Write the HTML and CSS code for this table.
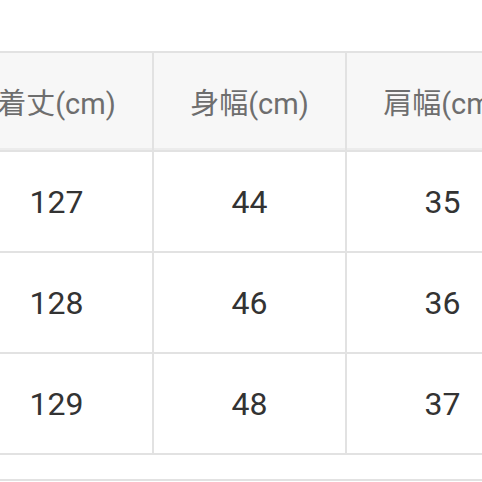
FILE: index.html
```html
<!DOCTYPE html>
<html lang="ja">
<head>
<meta charset="utf-8">
<link rel="stylesheet" href="styles.css">
</head>
<body>
<div class="clip">
  <div class="grid">
    <div class="cell head">着丈(cm)</div>
    <div class="cell head">身幅(cm)</div>
    <div class="cell head">肩幅(cm)</div>
    <div class="cell">127</div>
    <div class="cell">44</div>
    <div class="cell">35</div>
    <div class="cell">128</div>
    <div class="cell">46</div>
    <div class="cell">36</div>
    <div class="cell">129</div>
    <div class="cell">48</div>
    <div class="cell">37</div>
    <div class="cell empty"></div>
  </div>
</div>
</body>
</html>
```
FILE: styles.css
```css
html, body {
  margin: 0;
  padding: 0;
  background: #ffffff;
}
body {
  width: 482px;
  height: 482px;
  overflow: hidden;
}
.clip {
  width: 482px;
  height: 482px;
  overflow: hidden;
  padding-top: 51px;
  box-sizing: border-box;
}
.grid {
  margin-left: -41px;
  width: 581px;
  display: grid;
  grid-template-columns: 191px 191px 191px;
  grid-template-rows: 97px 99px 99px 99px 24px;
  gap: 2px;
  padding: 2px;
  background: #e2e2e2;
  font-family: Roboto, "Noto Sans CJK JP", sans-serif;
}
.cell {
  background: #ffffff;
  display: flex;
  align-items: center;
  justify-content: center;
  font-size: 32px;
  color: #333333;
}
.head {
  background: #f7f7f7;
  color: #6e6e6e;
  font-size: 29px;
  border-bottom: 2px solid #ececec;
}
.empty {
  grid-column: 1 / span 3;
}
```
